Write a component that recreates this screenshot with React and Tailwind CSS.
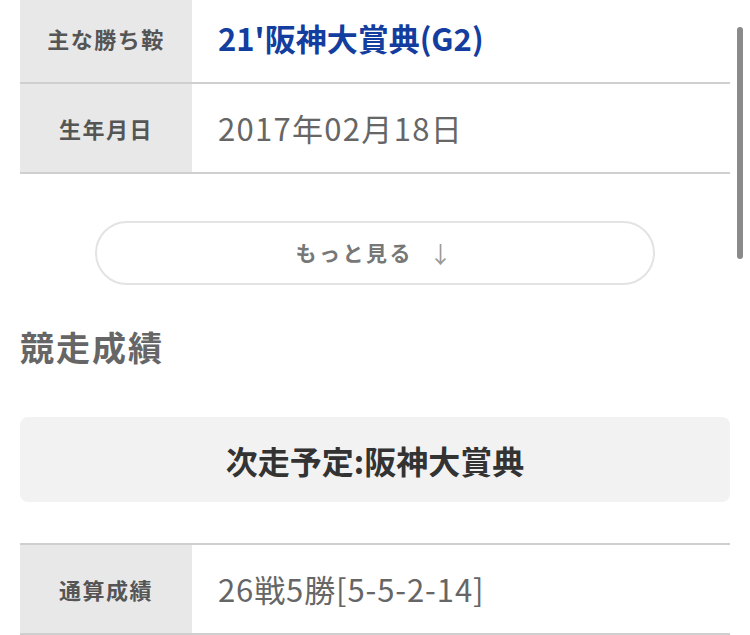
export default function App() {
  const font = { fontFamily: '"Noto Sans CJK JP", "Noto Sans", sans-serif' };
  return (
    <div className="relative w-[750px] h-[635px] overflow-hidden bg-white" style={font}>
      <div className="mt-[-6px] px-5 w-[750px]">
        {/* table 1 */}
        <div className="w-[710px]">
          <div className="flex h-[90px] border-b-2 border-[#cfcfcf]">
            <div className="w-[172px] bg-[#e8e8e8] flex items-center justify-center text-[22px] font-bold text-[#555] tracking-[1.5px]">主な勝ち鞍</div>
            <div className="flex-1 flex items-center pl-[26px] text-[31px] font-bold text-[#133d9e]">21'阪神大賞典(G2)</div>
          </div>
          <div className="flex h-[90px] border-b-2 border-[#cfcfcf]">
            <div className="w-[172px] bg-[#e8e8e8] flex items-center justify-center text-[22px] font-bold text-[#555] tracking-[1.5px]">生年月日</div>
            <div className="flex-1 flex items-center pl-[26px] text-[31px] text-[#666] tracking-[1.3px]">2017年02月18日</div>
          </div>
        </div>
        {/* more button */}
        <div className="flex justify-center mt-[47px]">
          <div className="w-[560px] h-[64px] rounded-full border-2 border-[#e3e3e3] flex items-center justify-center text-[21px] font-bold text-[#777] tracking-[2.5px]">
            もっと見る<span className="ml-4 font-normal text-[#999] text-[23px]">↓</span>
          </div>
        </div>
        {/* heading */}
        <div className="mt-[40px] text-[34px] font-bold text-[#666] leading-[44px] tracking-[2px]">競走成績</div>
        {/* next race */}
        <div className="mt-[48px] w-[710px] h-[85px] rounded-lg bg-[#f2f2f2] flex items-center justify-center text-[32px] font-bold text-[#333]">
          次走予定:阪神大賞典
        </div>
        {/* table 2 */}
        <div className="mt-[41px] w-[710px] border-t-2 border-[#cfcfcf]">
          <div className="flex h-[90px] border-b-2 border-[#cfcfcf]">
            <div className="w-[172px] bg-[#e8e8e8] flex items-center justify-center text-[22px] font-bold text-[#555] tracking-[1.5px]">通算成績</div>
            <div className="flex-1 flex items-center pl-[26px] text-[31px] text-[#666] tracking-[0.9px]">26戦5勝[5-5-2-14]</div>
          </div>
        </div>
      </div>
      {/* scrollbar */}
      <div className="absolute left-[737px] top-[27px] w-[6px] h-[232px] rounded-full bg-[#8a8a8a]" />
    </div>
  );
}
